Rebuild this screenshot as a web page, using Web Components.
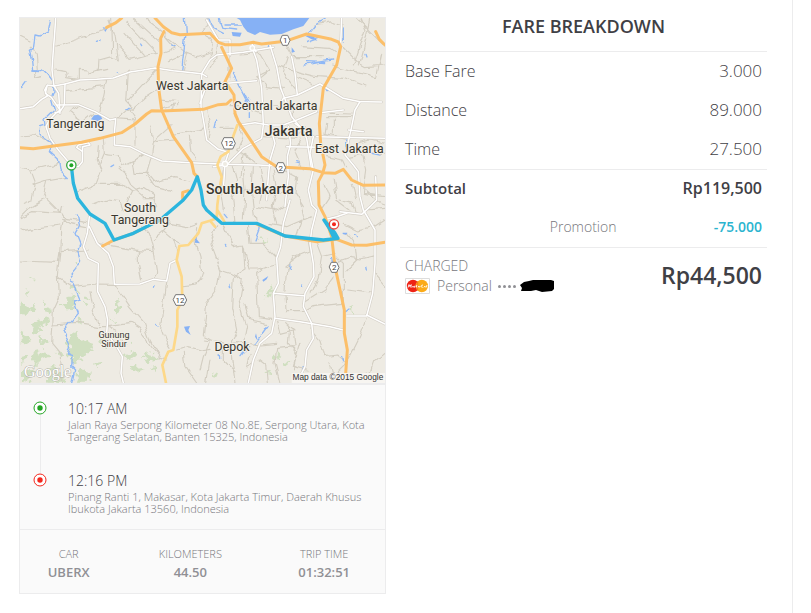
<!DOCTYPE html>
<html lang="en">
<head>
<meta charset="utf-8">
<title>Trip receipt</title>
<style>
body{margin:0;background:#fff;color:#3f4045;font-family:"Open Sans","Noto Sans",sans-serif;--line:#ececed;--muted:#909095;--soft:#77777c;--accent:#2bb4cf}
</style>
</head>
<body>
<trip-page>
  <trip-card slot="trip">
    <route-map slot="map"></route-map>
    <trip-stop slot="stops" kind="start"><span slot="time">10:17 AM</span>Jalan Raya Serpong Kilometer 08 No.8E, Serpong Utara, Kota Tangerang Selatan, Banten 15325, Indonesia</trip-stop>
    <trip-stop slot="stops" kind="end"><span slot="time">12:16 PM</span>Pinang Ranti 1, Makasar, Kota Jakarta Timur, Daerah Khusus Ibukota Jakarta 13560, Indonesia</trip-stop>
    <trip-stat slot="stats" label="CAR">UBERX</trip-stat>
    <trip-stat slot="stats" label="KILOMETERS">44.50</trip-stat>
    <trip-stat slot="stats" label="TRIP TIME">01:32:51</trip-stat>
  </trip-card>
  <fare-breakdown slot="fare">
    <span slot="title">FARE BREAKDOWN</span>
    <fare-payment slot="payment"><span slot="method">Personal</span><span slot="total">Rp44,500</span></fare-payment>
  </fare-breakdown>
</trip-page>

<template id="trip-page">
<style>
:host{display:grid;grid-template-columns:1fr 1fr;gap:14px;min-height:100vh;box-sizing:border-box;margin-right:18px;padding:0 25px 0 19px;border-right:1px solid var(--line);align-items:start}
</style>
<slot name="trip"></slot><slot name="fare"></slot>
</template>

<template id="trip-card">
<style>
:host{display:block;margin-top:17px;border:1px solid var(--line);background:#fafafa;min-width:0}
.map{border-bottom:2px solid var(--line)}
.stops{padding:15px 14px 3px 13px;display:grid;gap:18px}
.stats{display:grid;grid-template-columns:4fr 6fr 5fr;border-top:1px solid var(--line);padding:15px 0 12px}
</style>
<div class="map"><slot name="map"></slot></div>
<div class="stops"><slot name="stops"></slot></div>
<div class="stats"><slot name="stats"></slot></div>
</template>

<template id="trip-stop">
<style>
:host{display:grid;grid-template-columns:14px 1fr;column-gap:21px;--c:#23a523}
:host([kind=end]){--c:#f3261c}
.rail{position:relative}
svg{display:block;margin-top:1px}
.ring{fill:#fff;stroke:var(--c)}.dot{fill:var(--c)}
:host([kind=start]) .rail::after{content:"";position:absolute;left:7px;top:15px;bottom:-19px;width:1px;background:var(--line)}
.time{font-size:14px;line-height:18px;font-weight:300}
.addr{font-size:11px;line-height:12px;font-weight:300;color:var(--soft);min-height:35px;padding-top:1px}
</style>
<div class="rail"><svg width="14" height="14" viewBox="0 0 14 14" aria-hidden="true"><circle class="ring" cx="7" cy="7" r="6"/><circle class="dot" cx="7" cy="7" r="2.7"/></svg></div>
<div class="body"><div class="time"><slot name="time"></slot></div><div class="addr"><slot></slot></div></div>
</template>

<template id="trip-stat">
<style>
:host{display:block;text-align:center;color:var(--muted)}
.label{font-size:11px;line-height:18px;font-weight:300;color:var(--soft)}
.value{font-size:13px;line-height:18px;font-weight:600}
</style>
<div class="label"></div><div class="value"><slot></slot></div>
</template>

<template id="fare-breakdown">
<style>
:host{display:block;min-width:0}
h1{margin:0;padding:13px 0 12px;font-size:18px;line-height:26px;font-weight:600;text-align:center;border-bottom:1px solid var(--line)}
table{width:100%;border-collapse:collapse;font-size:16px;line-height:24px}
th,td{font-weight:300;text-align:left;height:39px;padding:0 5px 1px;box-sizing:border-box}
td{text-align:right}
tr.item td{font-size:17px}
.sub th,.sub td{font-weight:600;border-top:1px solid var(--line)}
.sub th{font-size:15px}
.promo th,.promo td{font-size:14px}
.promo th{color:var(--soft);text-align:right;padding-right:0}
.promo td{color:var(--accent);font-weight:600}
th{width:59%}
</style>
<h1><slot name="title"></slot></h1>
<table>
<tbody>
<tr class="item"><th scope="row">Base Fare</th><td>3.000</td></tr>
<tr class="item"><th scope="row">Distance</th><td>89.000</td></tr>
<tr class="item"><th scope="row">Time</th><td>27.500</td></tr>
<tr class="sub"><th scope="row">Subtotal</th><td>Rp119,500</td></tr>
<tr class="promo"><th scope="row">Promotion</th><td>-75.000</td></tr>
</tbody>
</table>
<slot name="payment"></slot>
</template>

<template id="fare-payment">
<style>
:host{display:flex;justify-content:space-between;align-items:center;border-top:1px solid var(--line);padding:8px 5px;color:var(--soft)}
.label,.card{font-size:14px;line-height:20px;font-weight:300}
.card{display:flex;align-items:center}
.logo{margin-right:7px}.dots{display:flex;gap:2px;margin:0 4px 0 6px}.dots i{width:3px;height:3px;border-radius:50%;background:#909095}
.total{font-size:23px;line-height:30px;padding-bottom:2px;font-weight:600;color:#3f4045}
</style>
<div>
<div class="label">CHARGED</div>
<div class="card">
<svg class="logo" width="25" height="16" viewBox="0 0 25 16" role="img" aria-label="MasterCard"><path d="M.5.5h24v15H.5z" fill="#fff" stroke="#ddd"/><circle cx="8" cy="8" r="6.2" fill="#ee2315"/><circle cx="16.8" cy="8" r="6.2" fill="#fbab18"/><path d="M12.4 3.7v8.6" stroke="#f47b20" stroke-width="1.5"/><path d="M3 9.6l1-3 .9 2 1.3-2-.3 3M7 9.5l1.1-1.4.5 1.3M10.4 8.1l-1 .1.8.8-.9.4M11.8 7l-.4 2.4M12.9 9l1-.9-.5 1.2M14.6 9.4l.3-1.4M18 7.1c-2.5-.5-2.2 3-.2 2.1M18.9 9.4l1-1.3.5 1.2M22 7l-.6 2.4" fill="none" stroke="#fff" stroke-width=".9"/></svg>
<slot name="method"></slot><span class="dots"><i></i><i></i><i></i><i></i></span>
<svg width="34" height="12" viewBox="0 0 34 12" aria-hidden="true"><path d="M0 5L4 2 9 1 13 0H31L34 1V9L32 11 22 12 16 10 11 11H1L2 8z" fill="#000"/></svg>
</div>
</div>
<div class="total"><slot name="total"></slot></div>
</template>

<template id="route-map">
<style>
:host{display:block}
svg{display:block;width:100%;height:auto}
path{fill:none;stroke-linecap:round;stroke-linejoin:round}
.minor path{stroke:#d3cec2;stroke-width:3.4}
.minor{filter:url(#wobble)}
.case{stroke:#d3cec6;stroke-width:8}
.fill{stroke:#fff;stroke-width:4.5}
.hw path{stroke:#fcbf69;stroke-width:9}
.yl{stroke:#fdd889;stroke-width:8}
.stream path{stroke:#8fb8f6;stroke-width:4}
.stream{filter:url(#wobble)}
.lake path{fill:#86b1f5}
.park path{fill:#d0dfc0}
.park{filter:url(#ragged)}
.route{stroke:#2bb5de;stroke-width:10}
text{font-family:Roboto,"Noto Sans",sans-serif;fill:#39372f;text-anchor:middle;paint-order:stroke;stroke:#f3f0e9;stroke-width:6;stroke-linejoin:round}
.big text{font-weight:500;font-size:42px}
.mid text{font-size:37px}
.small text{font-size:27px}
.shield path{fill:#fff;stroke:#777;stroke-width:3}
.shield text{font-size:24px;stroke:none;fill:#444}
.google{font:48px "Liberation Serif",serif;fill:#fff;stroke:#b5b2aa;stroke-width:3}
.credit{font:25px "Liberation Sans",sans-serif;stroke:none;fill:#333;text-anchor:end}
</style>
<svg viewBox="30 24 1095 1095" role="img" aria-label="Trip route from Tangerang to East Jakarta">
<defs>
<filter id="wobble" filterUnits="userSpaceOnUse" x="30" y="24" width="1095" height="1095"><feTurbulence type="fractalNoise" baseFrequency=".025" numOctaves="2" seed="4"/><feDisplacementMap in="SourceGraphic" scale="22" xChannelSelector="R" yChannelSelector="G"/></filter>
<filter id="ragged" filterUnits="userSpaceOnUse" x="30" y="24" width="1095" height="1095"><feTurbulence type="fractalNoise" baseFrequency=".05" numOctaves="2" seed="9"/><feDisplacementMap in="SourceGraphic" scale="40" xChannelSelector="R" yChannelSelector="G"/></filter>
<g id="white">
<path d="M137 24L134 70 130 120 126 180 132 228 165 222 210 210 260 208 310 204 360 186 400 180 435 174 490 182 575 191 600 150 620 135 700 127 790 112"/>
<path d="M132 228L112 225 104 240 112 258 95 268 70 290 30 296M112 225L106 250 124 262 150 300 135 312 118 330 108 350 120 385 145 420 184 466 205 470 217 455 218 410 240 405 235 398 205 405 200 412 218 425M132 228L146 250 150 310M165 222L163 285 150 305 135 308M140 285L205 284 255 305 300 330 317 326 313 370 313 405 360 410 400 430 455 453 540 458 650 463 745 465 800 468"/>
<path d="M575 191L573 290 582 340 590 390 625 418 650 425M575 191L590 200M590 30L625 90 660 90 660 135M570 280L590 225 740 212"/>
<path d="M727 115L740 150 755 235 760 345 755 385 700 415 650 465 610 470M780 105L800 170 812 235 832 285 845 320 870 350 890 385 905 480M845 140L855 190 862 255 820 265 812 280M862 255L930 222 1000 265 1050 275 1070 275 1115 276M995 24L992 105M725 100L738 125"/>
<path d="M690 345L735 338 775 345 820 345 860 330 920 305M1050 275L1035 300 1025 350 1015 395 1005 435 1030 465 1045 485 1050 560 1060 600 1095 660 1095 760 1088 850 1070 918 1010 918M780 345L795 400 780 450 775 500 770 570M835 350L842 400 832 440 835 500 825 590"/>
<path d="M855 340L910 380 900 430 910 480 895 540 905 585 920 600 905 660 900 700 910 760 912 800 885 850 880 890 905 940 910 985 890 1020 885 1070 860 1119"/>
<path d="M840 570L820 640 812 710 800 745 805 820 790 850 795 920 785 970 750 1000 730 1050 715 1119M790 850L880 857M795 925L870 935 960 950 1000 960M640 540L645 460 655 430"/>
<path d="M238 620L232 670 220 710 235 745 265 760 263 845 285 890 293 930 290 970 320 1010 337 1040 333 1090 340 1119M238 650L262 700 295 730 310 770 313 823 390 822 430 808 470 813 480 760 500 750"/>
<path d="M990 605L1055 613 1080 590 1100 570 1097 500M940 630L980 620 1010 610M920 380L1125 385M830 410L935 412M1000 300L930 308M1070 915L1125 942M1015 360L1060 365"/>
</g>
</defs>
<rect x="30" y="24" width="1095" height="1095" fill="#eeebe3"/>
<g class="park">
<path d="M35 880L60 890 78 882 75 905 55 900 45 918 35 912zM62 935L85 930 112 925 115 940 90 948 100 965 85 972 72 955zM105 905L122 895 120 915zM32 965L55 975 62 992 45 1002 32 995zM85 985L110 990 118 1003 98 1008zM80 1018L110 1022 128 1045 112 1052 92 1042 92 1062 75 1060 66 1040zM32 1040L52 1038 50 1055 34 1058zM36 1085L55 1070 72 1090 58 1115 36 1115zM105 1075L135 1065 158 1090 170 1115 112 1115zM140 1020L160 1030 155 1045z"/>
<path d="M188 970L205 965 210 995 240 990 248 1020 225 1030 215 1055 195 1062 180 1040 175 1000zM200 1085L225 1075 245 1090 235 1112 200 1112zM260 985L280 980 290 1005 268 1008zM252 1060L275 1055 270 1075zM345 1038L362 1022 378 1030 372 1048 352 1052zM395 1040L425 1028 438 1048 412 1056zM358 1072L385 1064 402 1078 378 1088zM420 1075L440 1070 436 1085zM170 860L200 860 195 905 180 895 160 895zM180 830L205 830 200 850zM315 870L330 875 322 895 332 905 315 915zM220 865L245 870 230 880zM190 750L205 750 200 765zM50 800L70 803 60 810zM40 850L60 845 55 858zM200 925L220 930 210 945zM345 1000L358 998 354 1012zM310 930L325 935 315 945zM95 870L115 875 108 885z"/>
<path d="M775 835L790 830 790 860 762 858 767 845zM750 690L770 688 762 708zM1018 895L1033 890 1028 910zM765 1090L782 1075 787 1092zM820 1060L838 1055 832 1077zM600 1085L625 1085 620 1100 605 1097zM795 1040L808 1040 802 1056z"/>
</g>
<g class="lake">
<path d="M680 24L898 24 880 48 850 58 815 72 780 74 750 66 735 75 712 65 700 50 690 30z"/>
<path d="M243 328L252 316 270 314 277 326 262 334zM278 52L293 54 286 66zM845 112L855 125 845 128zM886 78L905 72 922 92 905 88zM665 66L695 68 690 80 668 78zM555 680L562 675 560 688 570 700 555 698zM522 950L540 948 535 960 542 975 528 965zM945 236L965 242 950 244zM757 810L775 798 770 808 760 815zM735 980L738 970 743 992zM998 668L1012 668 1010 675 998 672zM905 980L913 976 908 990z"/>
</g>
<g class="minor">
<path d="M137 108L290 58M305 24L308 140 325 150 315 75 300 30M137 180L165 185 170 200 205 205 205 178 240 180 240 190 268 180 270 150 308 140M240 190L290 178M270 208L290 210 270 305M165 245L280 233M325 110L360 148 410 135 445 130M60 90L30 75M60 105L82 135 85 180 70 205 95 200M345 70L400 130M350 36L440 130M370 24L448 95M400 24L470 75M465 78L530 130 555 140 600 125M475 155L530 130M530 130L520 180M465 80L495 115 465 125"/>
<path d="M355 180L350 275 365 290 325 325M350 275L440 178M380 330L360 300 410 260 440 240M205 284L180 310 210 330 195 350M255 305L225 330M317 326L380 330M375 330L375 400M280 385L283 430 270 460M285 430L325 435 330 470 375 450 400 435M400 430L370 455 375 490 415 490M430 395L425 440 410 490 430 515 490 500 540 510M425 345L430 395 500 390M480 350L430 395M495 375L530 370 575 360 585 345M535 380L540 425 560 450M460 295L490 285 488 300M455 270L500 275 500 290"/>
<path d="M30 375L75 372 100 385 120 395M30 470L60 480 145 460M60 485L75 525 65 570 40 580M65 525L110 510 170 500M110 510L100 560 150 610 155 590M100 570L50 600 30 620M265 410L262 450 275 480 260 520 200 545M270 520L330 520 365 545 350 575M325 475L350 500 365 530 400 560 430 560M365 545L400 535 430 555 440 590 410 600M410 500L430 530 485 545M250 585L290 570 330 575 340 600"/>
<path d="M30 623L70 605 155 610 165 625 235 635M155 625L180 640 230 650M160 625L155 660 152 735 145 800 148 860 130 900 128 950 125 1000M30 665L70 655 150 645M30 753L145 757 150 725 235 720M145 805L185 830 260 822 313 823M125 945L200 940 265 950 290 950 360 940 385 955 430 1020 445 1035M125 1000L150 1030 158 1119M315 823L360 890 400 935 420 990 450 1045 470 1050M290 950L330 970 340 1000M265 940L250 900 240 845"/>
<path d="M265 700L385 722 385 760 395 810M385 722L430 725 440 790 430 808M430 725L420 680 395 650M430 690L460 665 490 690 510 700M460 665L480 640 465 610M480 640L530 650 560 640M490 690L500 720M560 650L555 690 570 740 575 790 565 820M465 895L455 960 470 1000 480 1015M470 820L460 890M520 830L560 825 575 810M500 1020L530 1010 570 1020 600 1015M520 1030L525 1070 560 1119"/>
<path d="M600 24L580 60 610 100 600 140M625 100L620 145 600 180M690 135L750 130 780 180 750 205M660 135L660 210M800 170L920 200 1000 205 1065 228M835 140L820 190 855 235M870 110L960 115 980 130M820 90L850 140 940 140M965 165L1100 200 1115 130M1030 165L1065 60 1050 24M995 105L1050 160 1070 170 1125 165M1080 24L1060 120 1048 168M1040 24L1125 110M910 45L970 35 1000 45M780 180L740 200 770 230 820 235M860 200L920 225M760 280L850 300 850 335"/>
<path d="M590 300L600 345 590 390M660 290L700 290 755 310M630 355L670 355M675 310L700 380 680 420 720 450M690 500L700 430 745 465M640 480L630 540 640 600M670 470L680 510 665 560 672 640M700 480L705 540 700 630M730 470L725 550 735 635M790 480L800 540 790 590 800 640M750 470L760 520 750 580M820 480L860 500 855 550 880 590M870 390L855 420 880 480M950 340L945 370 1010 385M950 320L1030 320M960 310L1030 312M970 370L970 330M1040 400L1080 390 1125 400M1010 440L1060 430 1125 430M1060 430L1070 480 1060 550 1125 560M950 440L1000 450 1010 470M945 520L960 560 940 590M970 510L980 570 1020 600M1030 520L1040 570M1065 540L1110 580 1125 585M760 380L860 385 885 350M640 540L680 550 720 540 790 550 835 545"/>
<path d="M620 650L600 700 630 780 620 840 590 880 580 980 600 990 580 1040 570 1080M640 645L670 710 700 705 705 780 670 800 665 890 680 960 660 1000 675 1119M630 780L660 790 700 810 690 870 710 950 700 1000 720 1010M715 640L720 700 760 700 800 740M700 705L720 780 740 780 800 765M740 790L745 920 785 925M740 790L770 770M705 880L720 930 770 940M650 1000L680 995 750 1005 800 1000M580 990L650 1000M600 1050L590 1119M640 1010L640 1050 675 1085M720 1030L710 1070 730 1060M750 1050L770 1065 775 1119M800 930L810 970 850 960 855 1010 800 1015M855 960L830 935M800 1015L795 1060 810 1119M840 940L835 1000 860 1030 850 1080"/>
<path d="M895 690L900 720 850 740 830 780 825 840M825 850L828 905 880 905 905 890 1000 880M825 770L870 735M1000 880L1000 760 980 740M975 760L1020 745 1050 750 1090 740M975 800L945 840 880 880M1090 850L1010 840M1010 780L1040 750 1035 700 1010 670M920 700L935 740 925 800 905 850M935 740L975 730M905 960L930 990 945 1040 980 1035 1010 1060 970 1100 960 1060M1070 920L1050 980 1020 1040 1015 1050M1125 1030L1090 1060 1080 1090 1040 1100 1020 1119M1090 790L1125 830M1095 650L1125 630M1000 640L1040 660 1090 650M1040 613L1030 580 990 570M1070 600L1125 595M780 640L830 650 900 620M870 570L880 620 860 680M740 590L800 600 830 580M870 1000L850 1070 890 1080"/>
</g>
<g class="stream">
<path d="M122 30L115 65 88 78 75 75 70 110 58 118 65 150 68 180 100 180 115 195 130 215 132 245 122 270 130 300 105 325 108 345 92 350 90 370 103 382 128 400 118 425 145 450 150 480 172 500"/>
<path d="M202 615L210 650 198 670 210 700 205 715 215 750 200 775 175 805 190 825 207 865 190 870 205 910 160 965 180 1005 172 1035 186 1040 182 1065 197 1080 188 1119"/>
<path d="M523 24L527 80 515 180M65 180L95 182M35 230L48 212M255 95L270 89M395 102L398 107M485 105L495 110M300 470L308 465M668 190L700 250 715 280M718 305L718 325M620 330L615 350M885 165L965 150M890 155L950 158M895 70L915 45 945 28M1000 60L1000 90M1010 390L1010 410M1060 425L1110 435M860 455L870 458M750 650L735 690M640 700L645 706M440 940L447 945M430 835L432 830M735 1000L775 945M705 1020L690 1040M965 745L970 770M1070 770L1072 780M1030 670L1045 680M1010 905L1020 897M875 828L872 822M630 1035L632 1045M660 820L662 830M840 765L838 775M885 1070L878 1080M995 1040L998 1055M780 100L778 110M640 610L648 620M930 80L890 95M1065 130L1068 138M320 185L326 187M360 290L350 297M600 30L610 55 640 70M630 30L640 55 680 60M645 45L688 45"/>
</g>
<use href="#white" class="case"/><use href="#white" class="fill"/>
<circle cx="727" cy="114" r="7" fill="#eeebe3" stroke="#fff" stroke-width="4"/>
<circle cx="645" cy="462" r="8" fill="#eeebe3" stroke="#fff" stroke-width="4"/>
<path class="yl" d="M682 345L670 378 655 425 632 440 622 465 635 500 628 540 622 585 620 625 600 632 575 640 565 670 535 705 508 708 500 750 515 800 517 870 502 900 502 950 490 1020 475 1025 457 1065 468 1119M622 600L645 638M600 632L615 650"/>
<g class="hw">
<path d="M30 413L70 416 130 408 215 397 270 385 335 368 375 342 410 312 425 302 455 303 580 298 625 284 650 282 663 270"/>
<path d="M435 24L460 50 485 68 510 74 600 70 625 97 645 104 690 104 730 97 755 102 825 94 890 72 965 88 985 96 992 110 980 165 940 235 928 340 932 400 945 465 938 490 925 515 927 585 945 620 965 680 975 770 1003 900 1003 970 1012 1020 1005 1119"/>
<path d="M462 65L452 85 453 130 444 170 446 235 455 300 490 380 545 458 552 490 562 500"/>
<path d="M635 112L665 175 645 215 672 255 675 310 685 335 755 440 800 470 900 476 940 488 975 490 1000 478 1025 510 1060 526 1125 525"/>
<path d="M335 24L318 38 290 52M1097 65L1108 88 1125 105M278 708L312 690 370 670 450 630M518 570L518 547 535 542M740 642L825 678 920 695 980 688 1025 705 1070 706 1125 697"/>
</g>
<path class="route" d="M184 467L190 520 203 565 240 612 285 640 312 690 370 670 450 630 520 570 545 540 562 500 573 540 580 585 590 600 635 640 740 640 825 678 940 690 984 685 974 668 942 630 958 655 972 684"/>
<g fill="#fff" stroke-width="4"><circle cx="184" cy="466" r="14" stroke="#35a940"/><circle cx="972" cy="643" r="14" stroke="#e64c45"/></g>
<circle cx="184" cy="466" r="6" fill="#21a526"/><circle cx="972" cy="643" r="6" fill="#f3261c"/>
<g class="shield"><path d="M818 76H833L840 91 833 106H818L811 91zM805 458H820L827 473 820 488H805L798 473zM965 757H980L987 772 980 787H965L958 772zM643 383H668L676 400 668 417H643L635 400zM498 854H522L530 870 522 886H498L490 870z"/>
<text x="826" y="100">1</text><text x="812" y="482">2</text><text x="973" y="781">2</text><text x="656" y="409">12</text><text x="510" y="879">12</text></g>
<g class="mid"><text x="547" y="240">West Jakarta</text><text x="196" y="354">Tangerang</text><text x="797" y="300">Central Jakarta</text><text x="1018" y="429">East Jakarta</text><text x="390" y="605">South</text><text x="390" y="642">Tangerang</text><text x="666" y="1022">Depok</text></g>
<g class="big"><text x="836" y="377">Jakarta</text><text x="720" y="553">South Jakarta</text></g>
<g class="small"><text x="312" y="983">Gunung</text><text x="312" y="1010">Sindur</text></g>
<text class="google" x="113" y="1100">Google</text>
<rect x="845" y="1089" width="280" height="30" fill="#f7f5f1"/><text class="credit" x="1120" y="1111">Map data ©2015 Google</text>
</svg>
</template>

<script>
for (const name of ["trip-page","trip-card","trip-stop","trip-stat","fare-breakdown","fare-payment","route-map"]) {
  customElements.define(name, class extends HTMLElement {
    constructor() {
      super();
      this.attachShadow({mode:"open"}).append(document.getElementById(name).content.cloneNode(true));
    }
    connectedCallback() {
      const label = this.getAttribute("label");
      if (label) this.shadowRoot.querySelector(".label").textContent = label;
    }
  });
}
</script>
</body>
</html>
